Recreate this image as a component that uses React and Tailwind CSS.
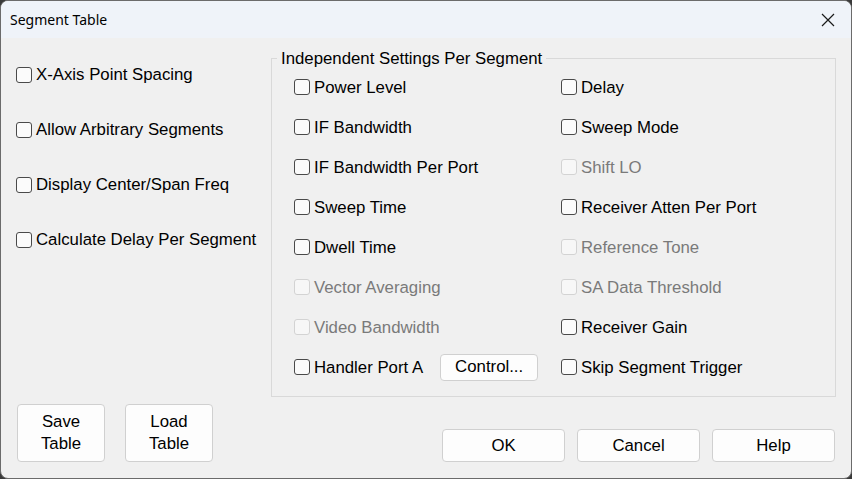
import React from 'react';

const leftOptions = [
  'X-Axis Point Spacing',
  'Allow Arbitrary Segments',
  'Display Center/Span Freq',
  'Calculate Delay Per Segment',
];

const colA = [
  { label: 'Power Level' },
  { label: 'IF Bandwidth' },
  { label: 'IF Bandwidth Per Port' },
  { label: 'Sweep Time' },
  { label: 'Dwell Time' },
  { label: 'Vector Averaging', disabled: true },
  { label: 'Video Bandwidth', disabled: true },
  { label: 'Handler Port A', control: true },
];

const colB = [
  { label: 'Delay' },
  { label: 'Sweep Mode' },
  { label: 'Shift LO', disabled: true },
  { label: 'Receiver Atten Per Port' },
  { label: 'Reference Tone', disabled: true },
  { label: 'SA Data Threshold', disabled: true },
  { label: 'Receiver Gain' },
  { label: 'Skip Segment Trigger' },
];

const Check = ({ label, disabled }) => (
  <label className="flex items-center gap-[4px] select-none">
    <span
      className={
        disabled
          ? 'w-[16px] h-[16px] rounded-[3px] border border-[#d3d3d3] bg-[#f7f7f7]'
          : 'w-[16px] h-[16px] rounded-[3px] border border-[#4a4a4a] bg-[#fbfbfb]'
      }
    />
    <span className={disabled ? 'text-[#7a7a7a]' : 'text-black'}>{label}</span>
  </label>
);

const Button = ({ children, className }) => (
  <button
    className={
      'bg-[#fdfdfd] border border-[#d0d0d0] rounded-[4px] text-black leading-[22px] ' +
      className
    }
  >
    {children}
  </button>
);

const Column = ({ items }) => (
  <div className="flex flex-col">
    {items.map((it) => (
      <div key={it.label} className="h-[40px] flex items-center gap-[17px]">
        <Check label={it.label} disabled={it.disabled} />
        {it.control && <Button className="w-[98px] h-[27px]">Control...</Button>}
      </div>
    ))}
  </div>
);

export default function App() {
  return (
    <div className="w-[852px] h-[479px] bg-[#3a3a3a]">
      <div
        className="w-full h-full flex flex-col rounded-[8px] overflow-hidden border border-[#6b6b6b] bg-[#f0f0f0] text-[16.8px]"
        style={{ fontFamily: '"Liberation Sans", Arial, sans-serif' }}
      >
        {/* title bar */}
        <div className="h-[37px] shrink-0 bg-[#eff3f9] flex items-center justify-between pl-[9px] pr-[14px]">
          <span className="text-[14px] text-black" style={{ fontFamily: '"Noto Sans", "Open Sans", sans-serif' }}>
            Segment Table
          </span>
          <svg width="16" height="16" viewBox="0 0 16 16" className="mr-[1px]">
            <path d="M2 2 L14 14 M14 2 L2 14" stroke="#1a1a1a" strokeWidth="1.2" fill="none" />
          </svg>
        </div>

        {/* body */}
        <div className="flex-1 flex flex-col">
          <div className="flex">
            <div className="w-[270px] shrink-0 pl-[15px] pt-[9px] flex flex-col">
              {leftOptions.map((o) => (
                <div key={o} className="h-[55px] flex items-center">
                  <Check label={o} />
                </div>
              ))}
            </div>

            <fieldset className="mt-[8px] w-[565px] h-[351px] border border-[#d9d9d9] pl-[22px] pt-[8px]">
              <legend className="-ml-[17px] px-[4px] text-black">Independent Settings Per Segment</legend>
              <div className="grid grid-cols-[267px_1fr] -mt-[12px]">
                <Column items={colA} />
                <Column items={colB} />
              </div>
            </fieldset>
          </div>

          <div className="flex items-end mt-[7px] pl-[16px] pr-[16px]">
            <Button className="w-[88px] h-[58px]">
              Save
              <br />
              Table
            </Button>
            <Button className="w-[88px] h-[58px] ml-[20px]">
              Load
              <br />
              Table
            </Button>
            <div className="flex-1" />
            <Button className="w-[123px] h-[33px] border-[#0067c0]">OK</Button>
            <Button className="w-[123px] h-[33px] ml-[12px]">Cancel</Button>
            <Button className="w-[123px] h-[33px] ml-[12px]">Help</Button>
          </div>
        </div>
      </div>
    </div>
  );
}
